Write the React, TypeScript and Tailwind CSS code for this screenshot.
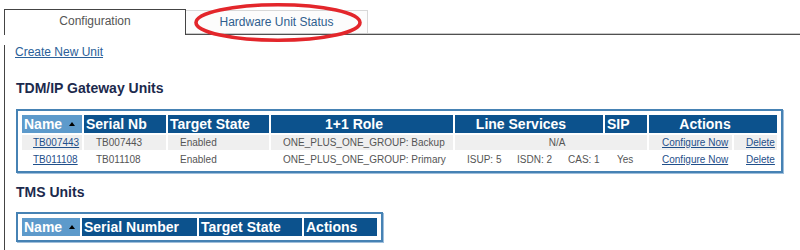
import React from "react";

type Row = {
  name: string;
  serial: string;
  state: string;
  role: string;
  line?: [string, string, string];
  sip?: string;
};

const rows: Row[] = [
  { name: "TB007443", serial: "TB007443", state: "Enabled", role: "ONE_PLUS_ONE_GROUP: Backup" },
  {
    name: "TB011108",
    serial: "TB011108",
    state: "Enabled",
    role: "ONE_PLUS_ONE_GROUP: Primary",
    line: ["ISUP: 5", "ISDN: 2", "CAS: 1"],
    sip: "Yes",
  },
];

const SortArrow: React.FC = () => (
  <svg width="6" height="4" viewBox="0 0 6 4" className="inline-block ml-[7px] mb-[3px]">
    <path d="M0 4 L3 0 L6 4 Z" fill="#000" />
  </svg>
);

const th = "h-[18px] p-0 pl-[2px] bg-[#0c528d] text-white text-[14px] font-bold leading-[18px] whitespace-nowrap text-left";
const thName = "h-[18px] p-0 pl-[2px] bg-[#5d9acb] text-white text-[14px] font-bold leading-[18px] whitespace-nowrap text-left";
const td = "h-[15px] p-0 pl-[12px] text-[10px] leading-[15px] text-[#555] whitespace-nowrap";
const link = "text-[#1f4f8a] underline";

const Box: React.FC<{ children: React.ReactNode }> = ({ children }) => (
  <div className="w-fit border-2 border-[#4682b4] p-[2px] shadow-[1px_1px_0_#9fbfdc]">{children}</div>
);

export default function App() {
  return (
    <div className="relative w-[800px] h-[250px] overflow-hidden bg-white font-['Liberation_Sans',Arial,sans-serif]">
      {/* tabs */}
      <div className="flex pt-[9px] pl-[4px]">
        <div className="w-[182px] h-[26px] border-l border-t border-r border-[#444] text-center text-[12px] leading-[22px] text-[#555]">
          Configuration
        </div>
        <div className="flex-1 flex flex-col">
          <div className="flex h-[24px] pt-[1px]">
            <div className="w-[182px] h-[23px] border-t border-r border-[#d8d8d8] bg-[#fcfcfc] text-center text-[12px] leading-[22px] text-[#2f5e8e]">
              Hardware Unit Status
            </div>
          </div>
          <div className="h-[2px] border-t border-[#c8c8c8] bg-[#505050]" />
        </div>
      </div>

      {/* panel */}
      <div className="ml-[4px] -mt-[1px] h-[230px] border-l border-[#444] pl-[10px]">
        <a className="block mt-[11px] w-fit text-[12px] leading-[14px] text-[#2a6099] underline">Create New Unit</a>

        <h2 className="mt-[21px] ml-[1px] text-[14px] leading-[17px] font-bold text-[#1c2a4d]">TDM/IP Gateway Units</h2>
        <div className="mt-[12px] ml-[1px]">
          <Box>
            <table className="table-fixed w-[759px] border-separate border-spacing-[2px]">
              <colgroup>
                <col className="w-[60px]" />
                <col className="w-[82px]" />
                <col className="w-[101px]" />
                <col className="w-[182px]" />
                <col className="w-[48px]" />
                <col className="w-[49px]" />
                <col className="w-[47px]" />
                <col className="w-[42px]" />
                <col className="w-[83px]" />
                <col className="w-[43px]" />
              </colgroup>
              <thead>
                <tr>
                  <th className={thName}>
                    Name
                    <SortArrow />
                  </th>
                  <th className={th}>Serial Nb</th>
                  <th className={th}>Target State</th>
                  <th className={`${th} !text-center pr-[18px]`}>1+1 Role</th>
                  <th colSpan={3} className={`${th} !text-center pr-[18px]`}>
                    Line Services
                  </th>
                  <th className={th}>SIP</th>
                  <th colSpan={2} className={`${th} !text-center pr-[18px]`}>
                    Actions
                  </th>
                </tr>
              </thead>
              <tbody>
                {rows.map((r, i) => {
                  const bg = i === 0 ? "bg-[#efefef]" : "";
                  return (
                    <tr key={r.name}>
                      <td className={`${td} !pl-[11px] ${bg}`}>
                        <a className={link}>{r.name}</a>
                      </td>
                      <td className={`${td} ${bg}`}>{r.serial}</td>
                      <td className={`${td} ${bg}`}>{r.state}</td>
                      <td className={`${td} ${bg}`}>{r.role}</td>
                      {r.line ? (
                        <>
                          {r.line.map((l) => (
                            <td key={l} className={td}>
                              {l}
                            </td>
                          ))}
                          <td className={td}>{r.sip}</td>
                        </>
                      ) : (
                        <td colSpan={4} className={`${td} text-center ${bg}`}>
                          N/A
                        </td>
                      )}
                      <td className={`${td} !pl-[13px] ${bg}`}>
                        <a className={link}>Configure Now</a>
                      </td>
                      <td className={`${td} ${bg}`}>
                        <a className={link}>Delete</a>
                      </td>
                    </tr>
                  );
                })}
              </tbody>
            </table>
          </Box>
        </div>

        <h2 className="mt-[11px] ml-[1px] text-[14px] leading-[17px] font-bold text-[#1c2a4d]">TMS Units</h2>
        <div className="mt-[11px] ml-[1px]">
          <Box>
            <table className="table-fixed w-[359px] border-separate border-spacing-[2px]">
              <colgroup>
                <col className="w-[58px]" />
                <col className="w-[115px]" />
                <col className="w-[103px]" />
                <col className="w-[73px]" />
              </colgroup>
              <thead>
                <tr>
                  <th className={thName}>
                    Name
                    <SortArrow />
                  </th>
                  <th className={th}>Serial Number</th>
                  <th className={th}>Target State</th>
                  <th className={th}>Actions</th>
                </tr>
              </thead>
            </table>
          </Box>
        </div>
      </div>

      {/* hand-drawn highlight around the second tab */}
      <svg className="absolute left-[190px] top-0 pointer-events-none" width="176" height="46" viewBox="0 0 176 46">
        <ellipse cx="88" cy="22.5" rx="82" ry="17.8" fill="none" stroke="#e3262b" strokeWidth="3.6" />
      </svg>
    </div>
  );
}
